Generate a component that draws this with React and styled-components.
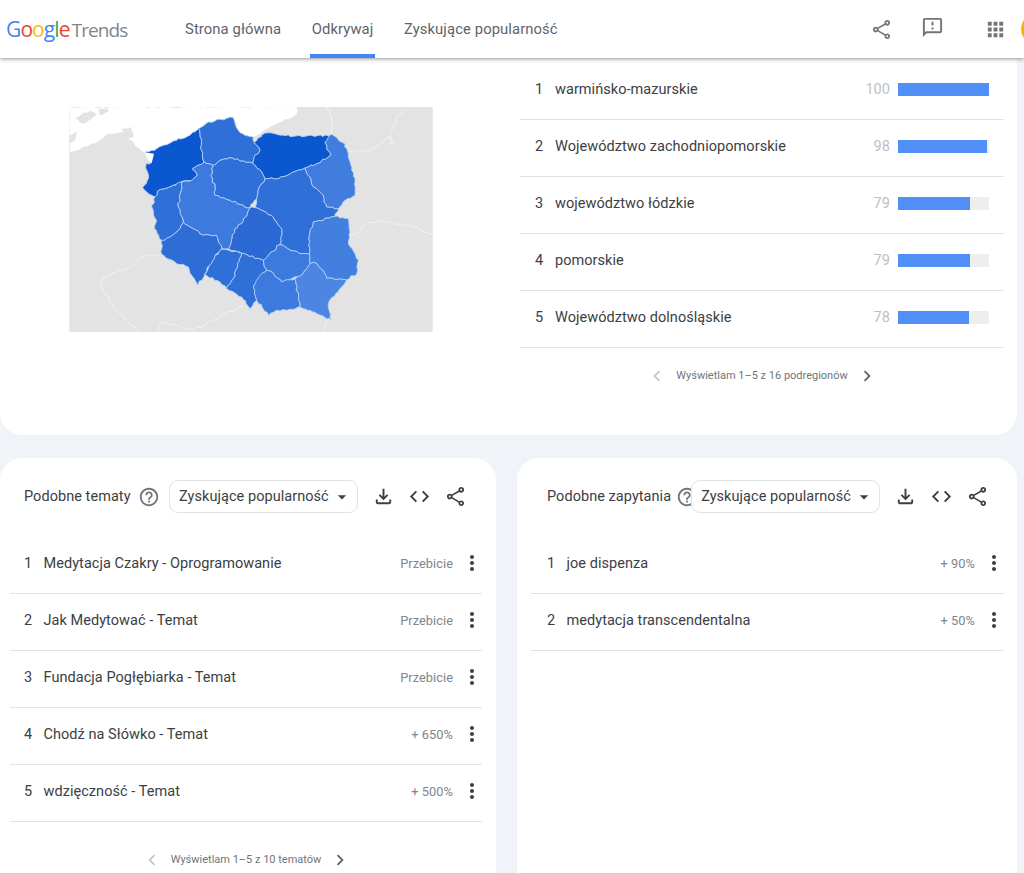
import React from 'react';
import styled, { createGlobalStyle } from 'styled-components';
import {
  MdOutlineShare,
  MdOutlineFeedback,
  MdApps,
  MdHelpOutline,
  MdArrowDropDown,
  MdOutlineFileDownload,
  MdCode,
  MdMoreVert,
  MdChevronLeft,
  MdChevronRight,
} from 'react-icons/md';

const GlobalStyle = createGlobalStyle`
  html, body {
    margin: 0;
    height: 873px;
    overflow: hidden;
    background: #f0f4f9;
    font-family: Roboto, "Liberation Sans", sans-serif;
  }
`;

const Header = styled.header`
  position: relative;
  z-index: 2;
  height: 58px;
  display: flex;
  align-items: center;
  overflow: hidden;
  background: #fff;
  box-shadow: 0 1px 4px rgba(60, 64, 67, 0.55);
`;
const Logo = styled.div`
  width: 183.5px;
  padding-left: 6px;
  box-sizing: border-box;
  display: flex;
  align-items: baseline;
  font-family: "Open Sans", sans-serif;
  font-size: 21px;
  letter-spacing: -0.9px;
`;
const LogoLetter = styled.span`
  color: ${(p) => p.$color};
`;
const LogoProduct = styled.span`
  margin-left: 2px;
  font-size: 19px;
  color: #80868b;
  letter-spacing: -0.9px;
`;
const Nav = styled.nav`
  display: flex;
  gap: 27.5px;
  height: 100%;
`;
const NavItem = styled.a`
  display: flex;
  align-items: center;
  height: 100%;
  box-sizing: border-box;
  padding: 0 1.5px 1px;
  font-size: 14.8px;
  letter-spacing: 0.1px;
  color: #5f6368;
  border-bottom: 4px solid ${(p) => (p.$active ? '#4285f4' : 'transparent')};
  border-top: 4px solid transparent;
  border-radius: 4px 4px 0 0;
`;
const HeaderActions = styled.div`
  margin-left: auto;
  display: flex;
  align-items: center;
  color: #70757a;
  flex-shrink: 0;
  font-size: 23px;
`;
const HeaderIcon = styled.span`
  display: flex;
  margin-right: ${(p) => p.$gap}px;
  margin-bottom: ${(p) => p.$lift || 0}px;
`;
const Avatar = styled.span`
  width: 32px;
  height: 32px;
  box-sizing: border-box;
  margin-right: -29px;
  border-radius: 50%;
  border: 3px solid #f4b400;
  flex-shrink: 0;
`;

const TopCard = styled.section`
  width: 1017px;
  height: 377px;
  display: flex;
  background: #fff;
  border-radius: 0 0 22px 22px;
`;
const MapColumn = styled.div`
  width: 520px;
  padding: 49px 0 0 69px;
  box-sizing: border-box;
`;
const MapSvg = styled.svg`
  display: block;
  width: 364px;
  height: 225px;
`;
const RankColumn = styled.div`
  width: 484px;
  padding-top: 5px;
`;

const BottomGrid = styled.div`
  margin-top: 23px;
  display: grid;
  grid-template-columns: 496px 500px;
  gap: 21px;
`;
const Card = styled.section`
  height: 500px;
  padding: 22px ${(p) => p.$right}px 0 ${(p) => p.$left}px;
  box-sizing: border-box;
  background: #fff;
  border-radius: 22px 22px 0 0;
`;
const CardHeader = styled.div`
  height: 33px;
  margin-bottom: 24px;
  padding-left: ${(p) => p.$inset}px;
  display: flex;
  align-items: center;
`;
const CardTitle = styled.h2`
  margin: 0;
  font-size: 14.5px;
  font-weight: 400;
  letter-spacing: 0.05px;
  color: #3c4043;
  white-space: nowrap;
`;
const HelpIcon = styled(MdHelpOutline)`
  flex-shrink: 0;
  margin-left: ${(p) => p.$gap}px;
  font-size: 22px;
  color: #70757a;
`;
const Select = styled.div`
  position: relative;
  width: 189px;
  height: 33px;
  margin-left: ${(p) => p.$offset}px;
  padding-left: 9px;
  box-sizing: border-box;
  flex-shrink: 0;
  display: flex;
  align-items: center;
  justify-content: space-between;
  font-size: 14.5px;
  letter-spacing: 0.05px;
  white-space: nowrap;
  color: #3c4043;
  background: #fff;
  border: 1px solid #e3e3e3;
  border-radius: 9px;
`;
const Caret = styled(MdArrowDropDown)`
  font-size: 20px;
  margin-right: 5px;
  color: #3c4043;
`;
const CardActions = styled.div`
  margin-left: 14px;
  display: flex;
  gap: 13px;
  font-size: 23px;
  color: #3c4043;
`;
const ActionIcon = styled.span`
  display: flex;
`;

const Row = styled.div`
  height: 57px;
  box-sizing: border-box;
  padding: 0 ${(p) => p.$right}px 4px ${(p) => p.$left}px;
  display: flex;
  align-items: center;
  font-size: 14.5px;
  letter-spacing: 0.05px;
  color: #3c4043;
  border-bottom: 1px solid #e3e3e3;
`;
const Rank = styled.span`
  width: ${(p) => p.$width}px;
  flex-shrink: 0;
`;
const Label = styled.span`
  flex: 1;
`;
const Score = styled.span`
  margin-right: 8px;
  color: #bdc1c6;
`;
const BarTrack = styled.div`
  width: 91px;
  height: 13px;
  background: #eeeeee;
`;
const BarFill = styled.div`
  height: 100%;
  background: #4f8ff7;
`;
const Change = styled.span`
  font-size: 12.8px;
  color: #80868b;
`;
const MoreIcon = styled(MdMoreVert)`
  margin: 0 -2px 0 7px;
  font-size: 24px;
  color: #3c4043;
`;
const Pager = styled.div`
  margin-top: ${(p) => p.$top}px;
  display: flex;
  justify-content: center;
  align-items: center;
  gap: 10px;
  font-size: 11px;
  color: #70757a;
`;
const PagerArrow = styled.span`
  display: flex;
  font-size: 22px;
  margin: -6px -2px;
  color: ${(p) => (p.$disabled ? '#c4c7c5' : '#5f6368')};
`;

const GOOGLE = [
  ['G', '#4285f4'],
  ['o', '#ea4335'],
  ['o', '#fbbc05'],
  ['g', '#4285f4'],
  ['l', '#34a853'],
  ['e', '#ea4335'],
];

const REGIONS = [
  ['#0b57d0', '255,155 290,145 340,122 390,105 415,85 420,100 425,150 432,185 415,195 398,205 412,225 395,240 365,243 340,255 300,268 285,290 265,280 248,262 265,235 258,190 275,185 255,160'],
  ['#2f6fd8', '415,85 445,65 480,57 520,52 525,70 535,90 555,105 580,110 582,125 600,150 585,165 578,188 550,182 510,172 480,180 460,195 432,185 425,150 420,100'],
  ['#0b57d0', '582,125 615,98 700,108 815,105 795,125 812,165 770,190 735,203 700,215 655,235 615,235 605,215 578,188 585,165 600,150'],
  ['#407dde', '815,102 855,130 865,170 875,210 885,235 885,285 855,300 835,325 800,320 785,280 760,260 735,203 770,190 812,165 795,125'],
  ['#2f6fd8', '460,195 480,180 510,172 550,182 578,188 605,215 615,235 598,260 590,295 570,322 540,312 510,300 465,285 465,260 452,225'],
  ['#2f6fd8', '615,235 655,235 700,215 735,203 760,260 785,280 800,320 835,325 825,348 760,365 750,395 748,460 720,460 660,433 665,385 640,350 585,322 590,295 598,260'],
  ['#3d7ade', '432,185 460,195 452,225 465,260 465,285 510,300 540,312 570,322 545,370 525,385 505,445 485,445 470,405 430,405 390,380 370,365 355,320 365,245 395,240 412,225 398,205'],
  ['#2f6fd8', '365,245 355,320 370,365 360,385 330,410 305,420 283,385 290,360 275,320 285,290 300,268 340,255'],
  ['#2e6cd6', '305,420 330,410 360,385 370,365 390,380 430,405 470,405 485,445 465,465 435,520 415,553 395,525 385,500 350,490 305,462'],
  ['#2f6fd8', '485,447 545,458 520,535 500,565 480,545 435,522 465,465'],
  ['#2f6fd8', '545,458 610,480 620,510 580,560 590,600 570,625 545,590 500,565 520,535'],
  ['#2b69d5', '570,322 585,322 640,350 665,385 660,433 625,465 610,480 545,458 505,445 525,385 545,370'],
  ['#3d7ade', '660,433 720,460 748,460 750,490 725,525 665,545 640,518 620,510 610,480 625,465'],
  ['#3d7ade', '620,510 640,518 665,545 705,535 720,620 680,630 650,630 625,645 590,600 580,560 600,525'],
  ['#4d86e2', '705,535 725,525 750,490 762,485 790,510 800,533 860,538 805,610 815,660 750,630 720,620'],
  ['#427fdf', '760,365 825,348 865,355 870,395 865,430 895,480 890,520 860,538 800,533 790,510 762,485 750,490 748,460 750,395'],
];

const SEA = '28,20 710,20 710,42 650,70 590,105 580,110 555,105 535,90 520,52 445,65 415,85 390,105 340,122 290,145 255,155 230,140 190,95 150,100 100,130 28,155';
const ISLANDS = [
  '28,130 28,105 50,95 45,120',
  '45,55 90,30 110,45 70,70',
  '115,30 140,22 145,35 120,45',
  '185,85 215,80 220,110 195,110',
];
const LAGOON = '252,156 282,160 275,188 262,176';
const BORDERS = [
  '300,470 260,462 200,505 130,530 120,550 160,620 235,695',
  '290,695 300,665 400,690 480,650 550,615',
  '785,695 800,660',
  '870,405 890,400 920,370 970,362 1060,380 1105,400 1118,400',
  '860,155 930,150 990,110 1005,125 993,132 990,110 1010,50 1040,25',
  '800,20 815,50 815,105',
];

// splits every edge into small steps with a fixed wobble, so that shared
// borders come out the same from both regions
const wobble = (x, y) => {
  const n = Math.sin(x * 12.9898 + y * 78.233) * 43758.5453;
  return (n - Math.floor(n) - 0.5) * 6;
};
const roughen = (points, closed = true) => {
  const pts = points.split(' ').map((p) => p.split(',').map(Number));
  const out = [];
  const count = closed ? pts.length : pts.length - 1;
  for (let i = 0; i < count; i += 1) {
    const [ax, ay] = pts[i];
    const [bx, by] = pts[(i + 1) % pts.length];
    const steps = Math.max(1, Math.round(Math.hypot(bx - ax, by - ay) / 9));
    out.push([ax, ay]);
    for (let s = 1; s < steps; s += 1) {
      const x = Math.round(ax + ((bx - ax) * s) / steps);
      const y = Math.round(ay + ((by - ay) * s) / steps);
      out.push([x + wobble(x, y), y + wobble(y, x)]);
    }
  }
  if (!closed) out.push(pts[pts.length - 1]);
  return out.map((p) => p.join(',')).join(' ');
};

const PolandMap = () => (
  <MapSvg viewBox="28 20 1090 675">
    <rect x="28" y="20" width="1090" height="675" fill="#e3e3e3" />
    <polygon points={roughen(SEA)} fill="#fff" />
    {ISLANDS.map((points) => (
      <polygon key={points} points={roughen(points)} fill="#e3e3e3" />
    ))}
    {BORDERS.map((points) => (
      <polyline key={points} points={roughen(points, false)} fill="none" stroke="#f2f2f2" strokeWidth="3" />
    ))}
    {REGIONS.map(([fill, points]) => (
      <polygon key={points} points={roughen(points)} fill={fill} stroke="#bcd1f4" strokeWidth="2.5" strokeLinejoin="round" />
    ))}
    <polygon points={LAGOON} fill="#fff" />
  </MapSvg>
);

const subregions = [
  { name: 'warmińsko-mazurskie', value: 100 },
  { name: 'Województwo zachodniopomorskie', value: 98 },
  { name: 'województwo łódzkie', value: 79 },
  { name: 'pomorskie', value: 79 },
  { name: 'Województwo dolnośląskie', value: 78 },
];
const topics = [
  ['Medytacja Czakry - Oprogramowanie', 'Przebicie'],
  ['Jak Medytować - Temat', 'Przebicie'],
  ['Fundacja Pogłębiarka - Temat', 'Przebicie'],
  ['Chodź na Słówko - Temat', '+ 650%'],
  ['wdzięczność - Temat', '+ 500%'],
];
const queries = [
  ['joe dispenza', '+ 90%'],
  ['medytacja transcendentalna', '+ 50%'],
];

const Pagination = ({ text, top }) => (
  <Pager $top={top}>
    <PagerArrow $disabled><MdChevronLeft /></PagerArrow>
    {text}
    <PagerArrow><MdChevronRight /></PagerArrow>
  </Pager>
);

const RelatedCard = ({ title, left, right, inset, offset, helpGap, rows, children }) => (
  <Card $left={left} $right={right}>
    <CardHeader $inset={inset}>
      <CardTitle>{title}</CardTitle>
      <HelpIcon $gap={helpGap} />
      <Select $offset={offset}>
        Zyskujące popularność
        <Caret />
      </Select>
      <CardActions>
        <ActionIcon><MdOutlineFileDownload /></ActionIcon>
        <ActionIcon><MdCode /></ActionIcon>
        <ActionIcon><MdOutlineShare /></ActionIcon>
      </CardActions>
    </CardHeader>
    {rows.map(([name, change], i) => (
      <Row key={name} $left={inset} $right={0}>
        <Rank $width={19.5}>{i + 1}</Rank>
        <Label>{name}</Label>
        <Change>{change}</Change>
        <MoreIcon />
      </Row>
    ))}
    {children}
  </Card>
);

export default function App() {
  return (
    <>
      <GlobalStyle />
      <Header>
        <Logo>
          {GOOGLE.map(([letter, color], i) => (
            <LogoLetter key={i} $color={color}>{letter}</LogoLetter>
          ))}
          <LogoProduct>Trends</LogoProduct>
        </Logo>
        <Nav>
          <NavItem>Strona główna</NavItem>
          <NavItem $active>Odkrywaj</NavItem>
          <NavItem>Zyskujące popularność</NavItem>
        </Nav>
        <HeaderActions>
          <HeaderIcon $gap={28}><MdOutlineShare /></HeaderIcon>
          <HeaderIcon $gap={40} $lift={4}><MdOutlineFeedback /></HeaderIcon>
          <HeaderIcon $gap={14}><MdApps /></HeaderIcon>
          <Avatar />
        </HeaderActions>
      </Header>
      <TopCard>
        <MapColumn>
          <PolandMap />
        </MapColumn>
        <RankColumn>
          {subregions.map((region, i) => (
            <Row key={region.name} $left={15} $right={15}>
              <Rank $width={20}>{i + 1}</Rank>
              <Label>{region.name}</Label>
              <Score>{region.value}</Score>
              <BarTrack>
                <BarFill style={{ width: `${region.value}%` }} />
              </BarTrack>
            </Row>
          ))}
          <Pagination text="Wyświetlam 1–5 z 16 podregionów" top={21} />
        </RankColumn>
      </TopCard>
      <BottomGrid>
        <RelatedCard title="Podobne tematy" left={10} right={14} inset={14} offset={9} helpGap={7.5} rows={topics}>
          <Pagination text="Wyświetlam 1–5 z 10 tematów" top={31} />
        </RelatedCard>
        <RelatedCard title="Podobne zapytania" left={14} right={13} inset={16} offset={-7} helpGap={5} rows={queries} />
      </BottomGrid>
    </>
  );
}
